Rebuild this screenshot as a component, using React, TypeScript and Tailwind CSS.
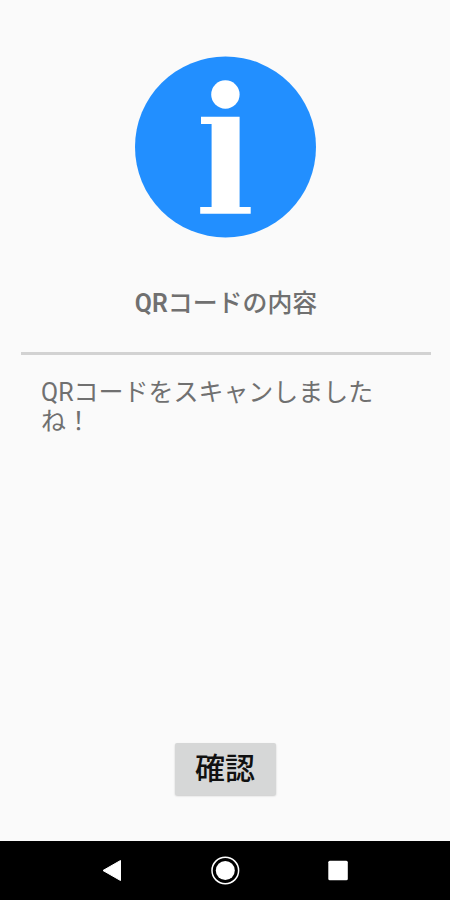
import React from 'react';

const InfoIcon: React.FC = () => (
    <svg className="ml-px h-[182px] w-[182px]" viewBox="0 0 182 182" aria-hidden="true">
        <circle cx="90.500" cy="91" r="90.5" fill="#228fff" />
        <circle cx="90.400" cy="38.5" r="14.2" fill="#fff" />
        <path d="M66 60.700H104.600V151H115.700V157.700H65.200V151H76.600V68H66Z" fill="#fff" />
    </svg>
);

const NavigationBar: React.FC = () => (
    <nav className="flex h-[59px] shrink-0 bg-black">
        <svg className="h-[59px] w-full" viewBox="0 0 450 59" fill="#fff" aria-hidden="true">
            <path d="M103 29.500L120.500 19.500V39.500Z" stroke="#fff" strokeLinejoin="round" />
            <circle cx="225.300" cy="29.500" r="13.300" fill="none" stroke="#fff" strokeWidth="1.500" />
            <circle cx="225.300" cy="29.500" r="9.500" />
            <rect x="328.300" y="19.800" width="19.500" height="19.500" rx="1.500" />
        </svg>
    </nav>
);

const App: React.FC = () => {
    return (
        <div className="flex h-[900px] w-[450px] flex-col overflow-hidden bg-[#fafafa] font-['Roboto','Noto_Sans_CJK_JP',sans-serif] text-[#707070]">
            <main className="flex flex-1 flex-col items-center pt-14">
                <InfoIcon />
                <h1 className="mt-[51px] ml-[2px] text-[24.9px] leading-[30px] font-medium whitespace-nowrap">
                    <span className="font-semibold">QR</span>コードの内容
                </h1>
                <div className="mt-[33px] ml-px h-[3px] w-[410px] bg-[#d2d2d2]" />
                <p className="mt-[23px] ml-[2px] w-[370px] text-[24.97px] leading-[29px]">
                    QRコードをスキャンしました
                    <br />
                    ね！
                </p>
                <button className="mt-auto mb-[46px] h-[52px] w-[101px] rounded-[2px] bg-[#d6d7d7] text-[30px] leading-[52px] font-medium text-[#111] shadow-[0_1px_2px_rgba(0,0,0,0.2)]">
                    確認
                </button>
            </main>
            <NavigationBar />
        </div>
    );
};

export default App;
